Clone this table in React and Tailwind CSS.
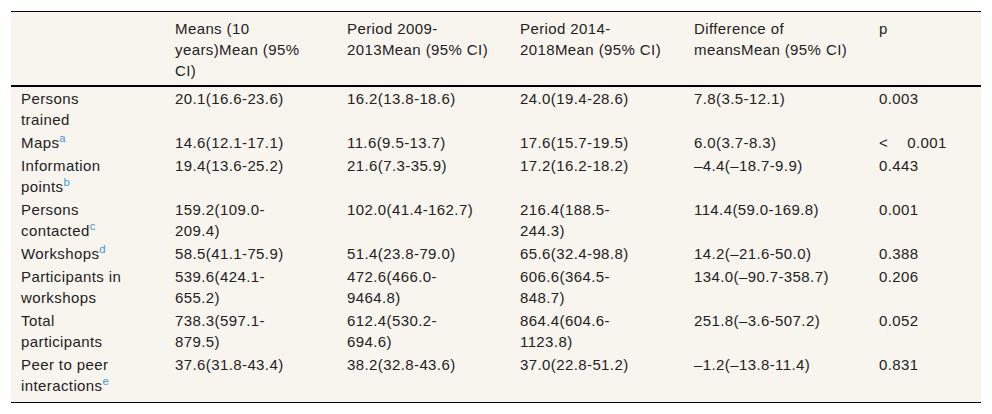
const headers = [
  [],
  ["Means (10", "years)Mean (95%", "CI)"],
  ["Period 2009-", "2013Mean (95% CI)"],
  ["Period 2014-", "2018Mean (95% CI)"],
  ["Difference of", "meansMean (95% CI)"],
  ["p"],
];

const rows = [
  {
    label: ["Persons", "trained"],
    cells: [["20.1(16.6-23.6)"], ["16.2(13.8-18.6)"], ["24.0(19.4-28.6)"], ["7.8(3.5-12.1)"]],
    p: "0.003",
  },
  {
    label: ["Maps"],
    note: "a",
    cells: [["14.6(12.1-17.1)"], ["11.6(9.5-13.7)"], ["17.6(15.7-19.5)"], ["6.0(3.7-8.3)"]],
    p: "less",
  },
  {
    label: ["Information", "points"],
    note: "b",
    cells: [["19.4(13.6-25.2)"], ["21.6(7.3-35.9)"], ["17.2(16.2-18.2)"], ["–4.4(–18.7-9.9)"]],
    p: "0.443",
  },
  {
    label: ["Persons", "contacted"],
    note: "c",
    cells: [["159.2(109.0-", "209.4)"], ["102.0(41.4-162.7)"], ["216.4(188.5-", "244.3)"], ["114.4(59.0-169.8)"]],
    p: "0.001",
  },
  {
    label: ["Workshops"],
    note: "d",
    cells: [["58.5(41.1-75.9)"], ["51.4(23.8-79.0)"], ["65.6(32.4-98.8)"], ["14.2(–21.6-50.0)"]],
    p: "0.388",
  },
  {
    label: ["Participants in", "workshops"],
    cells: [["539.6(424.1-", "655.2)"], ["472.6(466.0-", "9464.8)"], ["606.6(364.5-", "848.7)"], ["134.0(–90.7-358.7)"]],
    p: "0.206",
  },
  {
    label: ["Total", "participants"],
    cells: [["738.3(597.1-", "879.5)"], ["612.4(530.2-", "694.6)"], ["864.4(604.6-", "1123.8)"], ["251.8(–3.6-507.2)"]],
    p: "0.052",
  },
  {
    label: ["Peer to peer", "interactions"],
    note: "e",
    cells: [["37.6(31.8-43.4)"], ["38.2(32.8-43.6)"], ["37.0(22.8-51.2)"], ["–1.2(–13.8-11.4)"]],
    p: "0.831",
  },
];

const Lines = ({ lines, note }) => (
  <>
    {lines.map((line, i) => (
      <span key={i} className="block whitespace-nowrap">
        {line}
        {note && i === lines.length - 1 && (
          <sup className="text-[#3a98d8]">{note}</sup>
        )}
      </span>
    ))}
  </>
);

export default function App() {
  return (
    <div className="min-h-[414px] w-[992px] bg-white pt-[11px] pl-[11px] font-['Liberation_Sans',Arial,sans-serif] text-[15px] leading-[21px] tracking-[0.4px] text-[#222]">
      <div className="w-[970px] border-y border-black bg-[#f8f5ef]">
        <table className="w-[970px] table-fixed border-collapse">
          <colgroup>
            <col className="w-[154px]" />
            <col className="w-[172px]" />
            <col className="w-[173px]" />
            <col className="w-[174px]" />
            <col className="w-[185px]" />
            <col className="w-[112px]" />
          </colgroup>
          <thead>
            <tr>
              {headers.map((h, i) => (
                <th
                  key={i}
                  className="border-b-2 border-black pt-[6px] pb-[4px] pl-[10px] text-left align-top font-normal"
                >
                  <Lines lines={h} />
                </th>
              ))}
            </tr>
          </thead>
          <tbody>
            {rows.map((row, r) => {
              const pad =
                r === rows.length - 1 ? "pt-px pb-[6px]" : "py-px";
              return (
                <tr key={r}>
                  <td className={`${pad} pl-[10px] align-top`}>
                    <Lines lines={row.label} note={row.note} />
                  </td>
                  {row.cells.map((c, i) => (
                    <td key={i} className={`${pad} pl-[10px] align-top`}>
                      <Lines lines={c} />
                    </td>
                  ))}
                  <td className={`${pad} pl-[10px] align-top`}>
                    {row.p === "less" ? (
                      <span className="whitespace-nowrap">
                        <span className="mr-[19px]">&lt;</span>0.001
                      </span>
                    ) : (
                      row.p
                    )}
                  </td>
                </tr>
              );
            })}
          </tbody>
        </table>
      </div>
    </div>
  );
}
